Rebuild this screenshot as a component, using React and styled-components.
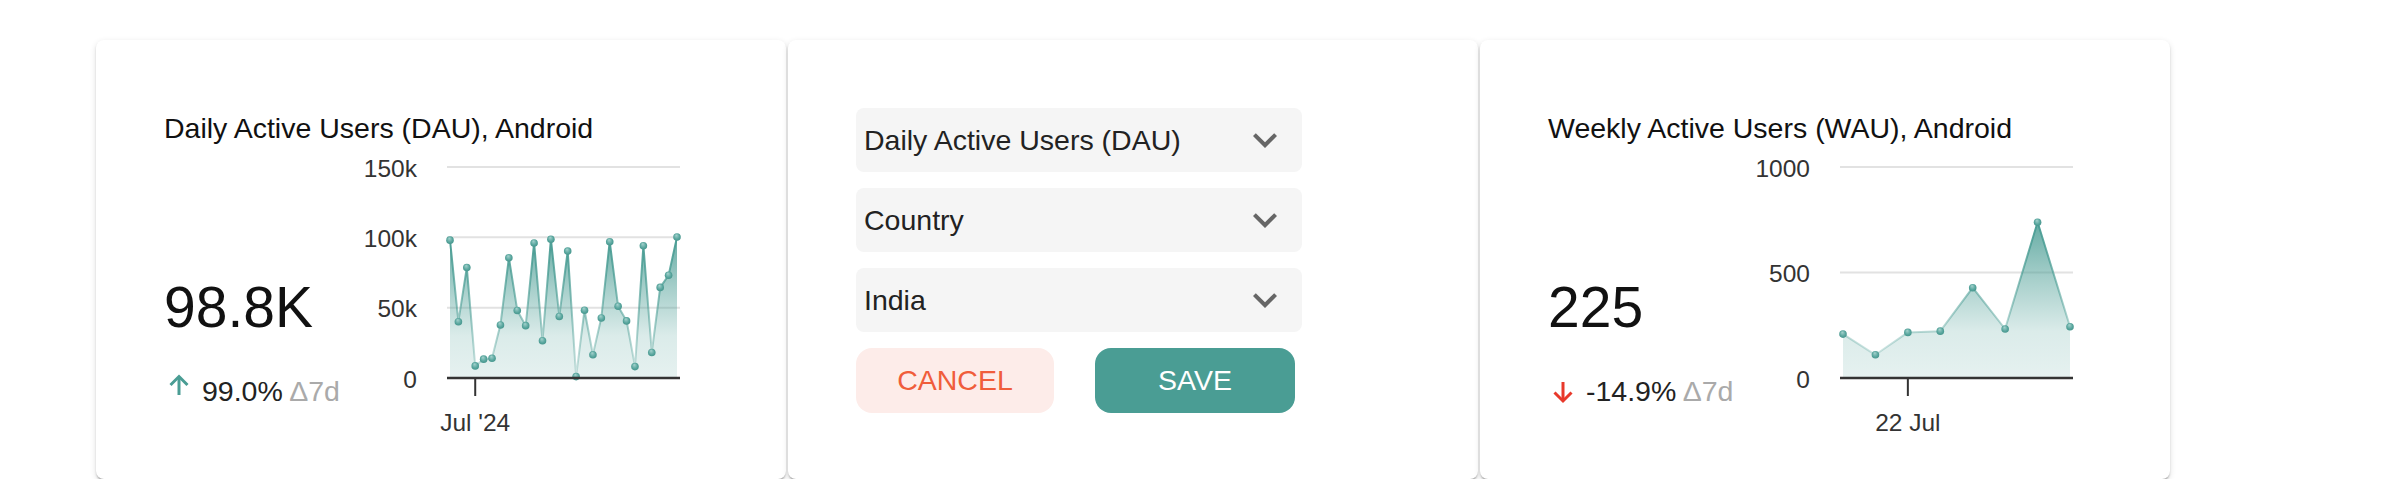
import React from 'react';
import styled, { createGlobalStyle } from 'styled-components';

const teal = '#4a9d94';
const red = '#e8392b';
const ink = '#222';
const axis = '#333';
const grid = '#e2e2e2';

const GlobalStyle = createGlobalStyle`
  body {
    margin: 0;
    background: #fff;
    font-family: "Liberation Sans", Arial, Helvetica, sans-serif;
  }
`;

const Page = styled.div`
  display: grid;
  grid-template-columns: repeat(3, 690px);
  column-gap: 2px;
  padding: 40px 0 0 96px;
`;

const Card = styled.div`
  box-sizing: border-box;
  height: 439px;
  background: #fff;
  border-radius: 8px;
  padding: ${props => props.$top}px 0 0 68px;
  box-shadow: 0 4px 2px -2px rgba(0, 0, 0, 0.2), 0 2px 2px 0 rgba(0, 0, 0, 0.14),
    0 2px 6px 0 rgba(0, 0, 0, 0.12);
`;

const Title = styled.h3`
  margin: 0;
  font-size: 28.5px;
  line-height: 34px;
  font-weight: normal;
  color: #111;
`;

const Body = styled.div`
  display: flex;
  margin-top: 4px;
`;

const Summary = styled.div`
  flex-shrink: 0;
  width: ${props => props.$width}px;
  padding-top: 126px;
  display: flex;
  flex-direction: column;
`;

const BigNumber = styled.div`
  font-size: 57px;
  line-height: 64px;
  color: #111;
`;

const Delta = styled.div`
  display: flex;
  align-items: center;
  margin-top: 35px;
  padding-left: 4px;
  font-size: 28.5px;
  line-height: 34px;
  color: ${ink};
`;

const ArrowBox = styled.svg`
  display: block;
  flex-shrink: 0;
  width: 22px;
  height: 34px;
  margin-right: 12px;
`;

const Period = styled.span`
  color: #aaa;
`;

const ChartSvg = styled.svg`
  display: block;
  flex-shrink: 0;
  overflow: visible;
`;

const Form = styled.div`
  display: flex;
  flex-direction: column;
  gap: 16px;
  width: 446px;
`;

const Select = styled.div`
  box-sizing: border-box;
  height: 64px;
  display: flex;
  align-items: center;
  justify-content: space-between;
  padding: 0 13px 0 8px;
  background: #f5f5f5;
  border-radius: 8px;
  font-size: 28.5px;
  color: ${ink};
`;

const Chevron = styled.svg`
  display: block;
  width: 48px;
  height: 48px;
  fill: #666;
`;

const Buttons = styled.div`
  display: flex;
  gap: 41px;
`;

const Button = styled.button`
  width: ${props => props.$width}px;
  height: 65px;
  border: none;
  border-radius: 16px;
  font-family: inherit;
  font-size: 28.5px;
  text-transform: uppercase;
  cursor: pointer;
  background: ${props => (props.$primary ? teal : '#fdece9')};
  color: ${props => (props.$primary ? '#fff' : '#f05d3b')};
`;

const dau = [
  98, 40, 78.5, 8.6, 13.4, 14, 37.7, 85.4, 48, 37.2, 96, 26.5, 98.6, 43.7,
  90.2, 1, 48.2, 16.5, 42.7, 96.9, 51, 40.6, 8.1, 94, 18.1, 64.4, 73, 100.2,
];
const wau = [208, 110, 216, 222, 428, 232, 738, 243];

const PLOT_LEFT = 97;
const PLOT_W = 233;
const BASE = 229;
const PLOT_H = 211;

function Arrow({ up }) {
  return (
    <ArrowBox viewBox="0 0 22 34">
      {up ? (
        <g fill="none" stroke={teal} strokeWidth="3">
          <path d="M11 3V21" />
          <path d="M2.5 11L11 2.5L19.5 11" />
        </g>
      ) : (
        <g fill="none" stroke={red} strokeWidth="3">
          <path d="M11 8V26.5" />
          <path d="M2.5 18.5L11 27L19.5 18.5" />
        </g>
      )}
    </ArrowBox>
  );
}

function Chart({ id, data, max, ticks, tickIndex, tickLabel }) {
  const step = (PLOT_W - 6) / (data.length - 1);
  const pts = data.map((v, i) => [PLOT_LEFT + 3 + i * step, BASE - (v / max) * PLOT_H]);
  const line = pts.map((p, i) => `${i ? 'L' : 'M'}${p[0].toFixed(1)} ${p[1].toFixed(1)}`).join(' ');
  const area = `${line} L${pts[pts.length - 1][0].toFixed(1)} ${BASE} L${pts[0][0].toFixed(1)} ${BASE} Z`;
  const tx = pts[tickIndex][0];

  return (
    <ChartSvg width="340" height="290" viewBox="0 0 340 290">
      <defs>
        <linearGradient id={`${id}-fill`} x1="0" y1="0" x2="0" y2="1">
          <stop offset="0" stopColor={teal} stopOpacity="0.85" />
          <stop offset="0.35" stopColor={teal} stopOpacity="0.5" />
          <stop offset="0.7" stopColor={teal} stopOpacity="0.2" />
          <stop offset="1" stopColor={teal} stopOpacity="0.14" />
        </linearGradient>
        <linearGradient id={`${id}-line`} x1="0" y1="0" x2="0" y2="1">
          <stop offset="0" stopColor={teal} stopOpacity="1" />
          <stop offset="0.5" stopColor={teal} stopOpacity="0.6" />
          <stop offset="1" stopColor={teal} stopOpacity="0.25" />
        </linearGradient>
        <radialGradient id={`${id}-dot`} cx="0.5" cy="0.5" r="0.6" fx="0.4" fy="0.25">
          <stop offset="0" stopColor="#a6d3ce" />
          <stop offset="0.6" stopColor="#5aa79f" />
          <stop offset="1" stopColor="#3e8f86" />
        </radialGradient>
      </defs>

      {ticks.map(t => {
        const y = BASE - (t.value / max) * PLOT_H;
        return (
          <g key={t.label}>
            {t.value > 0 && (
              <line x1={PLOT_LEFT} x2={PLOT_LEFT + PLOT_W} y1={y} y2={y} stroke={grid} strokeWidth="2" />
            )}
            <text
              x="67"
              y={y + 1}
              textAnchor="end"
              dominantBaseline="central"
              fontSize="24.5"
              fill={axis}
            >
              {t.label}
            </text>
          </g>
        );
      })}

      <path d={area} fill={`url(#${id}-fill)`} />
      <path d={line} fill="none" stroke={`url(#${id}-line)`} strokeWidth="2" strokeLinejoin="round" />
      {pts.map((p, i) => (
        <circle key={i} cx={p[0]} cy={p[1]} r="3.8" fill={`url(#${id}-dot)`} />
      ))}

      <line x1={PLOT_LEFT} x2={PLOT_LEFT + PLOT_W} y1={BASE} y2={BASE} stroke={axis} strokeWidth="2.5" />
      <line x1={tx} x2={tx} y1={BASE} y2={BASE + 18} stroke={axis} strokeWidth="2" />
      <text x={tx} y="282" textAnchor="middle" fontSize="24.5" fill={axis}>
        {tickLabel}
      </text>
    </ChartSvg>
  );
}

function MetricCard({ title, value, up, change, width, children }) {
  return (
    <Card $top={71}>
      <Title>{title}</Title>
      <Body>
        <Summary $width={width}>
          <BigNumber>{value}</BigNumber>
          <Delta>
            <Arrow up={up} />
            <span>
              {change} <Period>Δ7d</Period>
            </span>
          </Delta>
        </Summary>
        {children}
      </Body>
    </Card>
  );
}

function ExpandIcon() {
  return (
    <Chevron viewBox="0 0 24 24">
      <path d="M16.59 8.59 12 13.17 7.41 8.59 6 10l6 6 6-6z" />
    </Chevron>
  );
}

export default function App() {
  return (
    <>
      <GlobalStyle />
      <Page>
        <MetricCard title="Daily Active Users (DAU), Android" value="98.8K" up change="99.0%" width={186}>
          <Chart
            id="dau"
            data={dau}
            max={150}
            ticks={[
              { value: 150, label: '150k' },
              { value: 100, label: '100k' },
              { value: 50, label: '50k' },
              { value: 0, label: '0' },
            ]}
            tickIndex={3}
            tickLabel="Jul '24"
          />
        </MetricCard>

        <Card $top={68}>
          <Form>
            <Select>
              <span>Daily Active Users (DAU)</span>
              <ExpandIcon />
            </Select>
            <Select>
              <span>Country</span>
              <ExpandIcon />
            </Select>
            <Select>
              <span>India</span>
              <ExpandIcon />
            </Select>
            <Buttons>
              <Button $width={198}>Cancel</Button>
              <Button $width={200} $primary>
                Save
              </Button>
            </Buttons>
          </Form>
        </Card>

        <MetricCard title="Weekly Active Users (WAU), Android" value="225" change="-14.9%" width={195}>
          <Chart
            id="wau"
            data={wau}
            max={1000}
            ticks={[
              { value: 1000, label: '1000' },
              { value: 500, label: '500' },
              { value: 0, label: '0' },
            ]}
            tickIndex={2}
            tickLabel="22 Jul"
          />
        </MetricCard>
      </Page>
    </>
  );
}
